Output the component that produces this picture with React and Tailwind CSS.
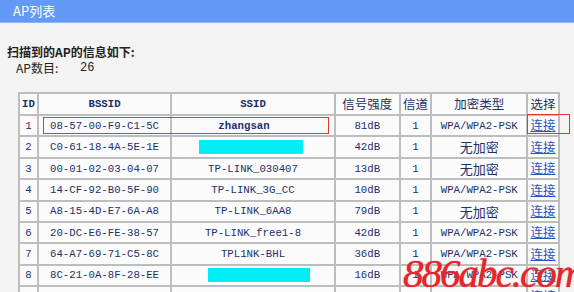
import React from 'react';

const rows = [
  { id: 1, bssid: '08-57-00-F9-C1-5C', ssid: 'zhangsan', signal: '81dB', ch: '1', enc: 'WPA/WPA2-PSK' },
  { id: 2, bssid: 'C0-61-18-4A-5E-1E', ssid: null, signal: '42dB', ch: '1', enc: '无加密' },
  { id: 3, bssid: '00-01-02-03-04-07', ssid: 'TP-LINK_030407', signal: '13dB', ch: '1', enc: '无加密' },
  { id: 4, bssid: '14-CF-92-B0-5F-90', ssid: 'TP-LINK_3G_CC', signal: '10dB', ch: '1', enc: 'WPA/WPA2-PSK' },
  { id: 5, bssid: 'A8-15-4D-E7-6A-A8', ssid: 'TP-LINK_6AA8', signal: '79dB', ch: '1', enc: '无加密' },
  { id: 6, bssid: '20-DC-E6-FE-38-57', ssid: 'TP-LINK_free1-8', signal: '42dB', ch: '1', enc: 'WPA/WPA2-PSK' },
  { id: 7, bssid: '64-A7-69-71-C5-8C', ssid: 'TPL1NK-BHL', signal: '36dB', ch: '1', enc: 'WPA/WPA2-PSK' },
  { id: 8, bssid: '8C-21-0A-8F-28-EE', ssid: null, signal: '16dB', ch: '1', enc: 'WPA/WPA2-PSK' },
  { id: 9, bssid: '00-21-00-00-44-F0', ssid: '', signal: '8dB', ch: '1', enc: 'WPA/WPA2-PSK' },
];

const cjk = "font-['Noto_Sans_CJK_SC',sans-serif]";
const mono = "font-['Liberation_Mono','Noto_Sans_CJK_SC',monospace]";
const cell = 'border border-[#bdbdbd] text-center p-0 align-middle';

export default function App() {
  return (
    <div className={`relative w-[574px] h-[292px] overflow-hidden bg-[#f3f3f3] ${cjk}`}>
      {/* title bar */}
      <div className="h-[23px] bg-[#6399f7] border-b border-[#8db4f7] pl-[13px] flex items-center text-white text-[13px]">
        AP列表
      </div>

      <div className="pl-[7px] pt-[22px] text-[12px] font-bold text-[#222] leading-[14px]">
        扫描到的AP的信息如下:
      </div>
      <div className="pl-[16px] pt-[2px] text-[12px] text-[#222] leading-[14px] flex">
        <span className="w-[64px]">AP数目:</span>
        <span className={mono}>26</span>
      </div>

      <div className="pl-[18px] pt-[17px]">
        <table className="border-separate border-spacing-0 border border-[#bdbdbd] w-[542px] text-[#22306a] bg-[#fbfbfb]">
          <colgroup>
            <col className="w-[19px]" />
            <col className="w-[134px]" />
            <col className="w-[164px]" />
            <col className="w-[65px]" />
            <col className="w-[32px]" />
            <col className="w-[96px]" />
            <col className="w-[32px]" />
          </colgroup>
          <thead>
            <tr className="h-[22px]">
              <th className={`${cell} ${mono} text-[10.7px] font-semibold`}>ID</th>
              <th className={`${cell} ${mono} text-[10.7px] font-semibold`}>BSSID</th>
              <th className={`${cell} ${mono} text-[10.7px] font-semibold`}>SSID</th>
              <th className={`${cell} text-[12.5px] font-normal`}>信号强度</th>
              <th className={`${cell} text-[12.5px] font-normal`}>信道</th>
              <th className={`${cell} text-[12.5px] font-normal`}>加密类型</th>
              <th className={`${cell} text-[12.5px] font-normal`}>选择</th>
            </tr>
          </thead>
          <tbody>
            {rows.map((r) => (
              <tr key={r.id} className="h-[21.3px]">
                <td className={`${cell} ${mono} text-[10.7px]`}>{r.id}</td>
                <td className={`${cell} ${mono} text-[10.7px]`}>{r.bssid}</td>
                <td className={`${cell} ${mono} text-[10.7px] ${r.id === 1 ? 'font-bold pr-[18px]' : ''}`}>
                  {r.ssid === null ? (
                    <div className={`h-[14px] bg-[#00eef6] ${r.id === 2 ? 'ml-[27px] w-[104px]' : 'ml-[36px] w-[102px]'}`} />
                  ) : (
                    r.ssid
                  )}
                </td>
                <td className={`${cell} ${mono} text-[10.7px]`}>{r.signal}</td>
                <td className={`${cell} ${mono} text-[10.7px]`}>{r.ch}</td>
                <td className={`${cell} ${r.enc === '无加密' ? 'text-[13px]' : `${mono} text-[10.7px]`}`}>{r.enc}</td>
                <td className={`${cell} text-[12.5px]`}>
                  <a className="text-[#2855c4] underline">连接</a>
                </td>
              </tr>
            ))}
          </tbody>
        </table>
      </div>

      {/* red highlight boxes */}
      <div className="absolute left-[43px] top-[117px] w-[286px] h-[17px] border-[1.5px] border-[#e3383a]" />
      <div className="absolute left-[527px] top-[114px] w-[43px] h-[20px] border-[1.5px] border-[#e3383a]" />

      {/* watermark */}
      <div className="absolute left-[403px] top-[251px] text-[41px] leading-[44px] italic text-[#e8252c] font-['Liberation_Serif',serif] tracking-[-2px] whitespace-nowrap [text-shadow:0_0_1px_#e8252c]">
        886abc.com
      </div>
    </div>
  );
}
